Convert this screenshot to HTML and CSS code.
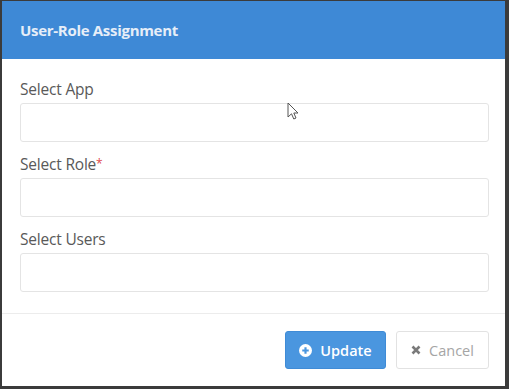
FILE: index.html
```html
<!DOCTYPE html>
<html lang="en">
<head>
    <meta charset="UTF-8">
    <meta name="viewport" content="width=device-width, initial-scale=1.0">
    <title>User-Role Assignment</title>
    <link rel="stylesheet" href="styles.css">
</head>
<body>

<div class="modal">
    <div class="modal-header">
        <h4>User-Role Assignment</h4>
    </div>

    <div class="modal-body">
        <div class="form-group">
            <label>Select App</label>
            <div class="select-box"></div>
        </div>
        <div class="form-group">
            <label>Select Role<span class="required">*</span></label>
            <div class="select-box"></div>
        </div>
        <div class="form-group">
            <label>Select Users</label>
            <div class="select-box"></div>
        </div>
    </div>

    <div class="modal-footer">
        <button class="btn btn-primary">
            <svg width="13" height="13" viewBox="0 0 12 12"><circle cx="6" cy="6" r="6" fill="#fff"/><path d="M6 3v6M3 6h6" stroke="#4a96df" stroke-width="2"/></svg>
            Update
        </button>
        <button class="btn btn-default">
            <svg width="10" height="10" viewBox="0 0 10 10"><path d="M1.5 1.5l7 7M8.5 1.5l-7 7" stroke="#7a7a7a" stroke-width="2.6"/></svg>
            Cancel
        </button>
    </div>

    <!-- mouse pointer captured in the shot -->
    <svg class="cursor" width="14" height="20" viewBox="0 0 14 20"><path d="M1 1v14l3.5-3.2 2.3 5.2 2.2-1-2.2-5H11z" fill="#fff" stroke="#555" stroke-width="1"/></svg>
</div>

</body>
</html>
```

FILE: styles.css
```css
body {
    margin: 0;
    background-color: #3b3b3b;
    font-family: 'Open Sans', 'Noto Sans', sans-serif;
    width: 509px;
    height: 389px;
    overflow: hidden;
}
.modal {
    position: relative;
    margin: 1px 4px 0 2px;
    height: 385px;
    background-color: #fff;
    display: flex;
    flex-direction: column;
}
.modal-header {
    background-color: #3e89d6;
    height: 58px;
    display: flex;
    align-items: center;
    padding: 0 18px;
}
.modal-header h4 {
    margin: 0;
    color: #e6eef8;
    font-size: 15px;
    font-weight: 700;
    letter-spacing: -0.3px;
}
.modal-body {
    padding: 20px 16px 0 18px;
    flex: 1;
}
.form-group {
    margin-bottom: 12px;
}
.form-group label {
    display: block;
    color: #595959;
    font-size: 15.5px;
    letter-spacing: -0.2px;
    line-height: 20px;
    margin-bottom: 4px;
}
.required {
    color: #e04b4b;
    font-size: 12px;
    vertical-align: top;
}
.select-box {
    border: 1px solid #e4e4e4;
    border-radius: 3px;
    box-sizing: border-box;
    height: 39px;
}
.modal-footer {
    border-top: 1px solid #ececec;
    height: 73px;
    box-sizing: border-box;
    display: flex;
    justify-content: flex-end;
    align-items: center;
    gap: 10px;
    padding: 0 16px 0 0;
}
.btn {
    height: 38px;
    border-radius: 3px;
    font-family: inherit;
    font-size: 14.5px;
    display: flex;
    align-items: center;
    gap: 8px;
    box-sizing: border-box;
    cursor: pointer;
}
.btn-primary {
    width: 101px;
    justify-content: center;
    background-color: #4a96df;
    border: 1px solid #3f8bd6;
    color: #fff;
    font-weight: 600;
}
.btn-default {
    width: 93px;
    justify-content: center;
    background-color: #fff;
    border: 1px solid #e2e2e2;
    color: #a5a5a5;
}
.cursor {
    position: absolute;
    left: 285px;
    top: 101px;
}
```
